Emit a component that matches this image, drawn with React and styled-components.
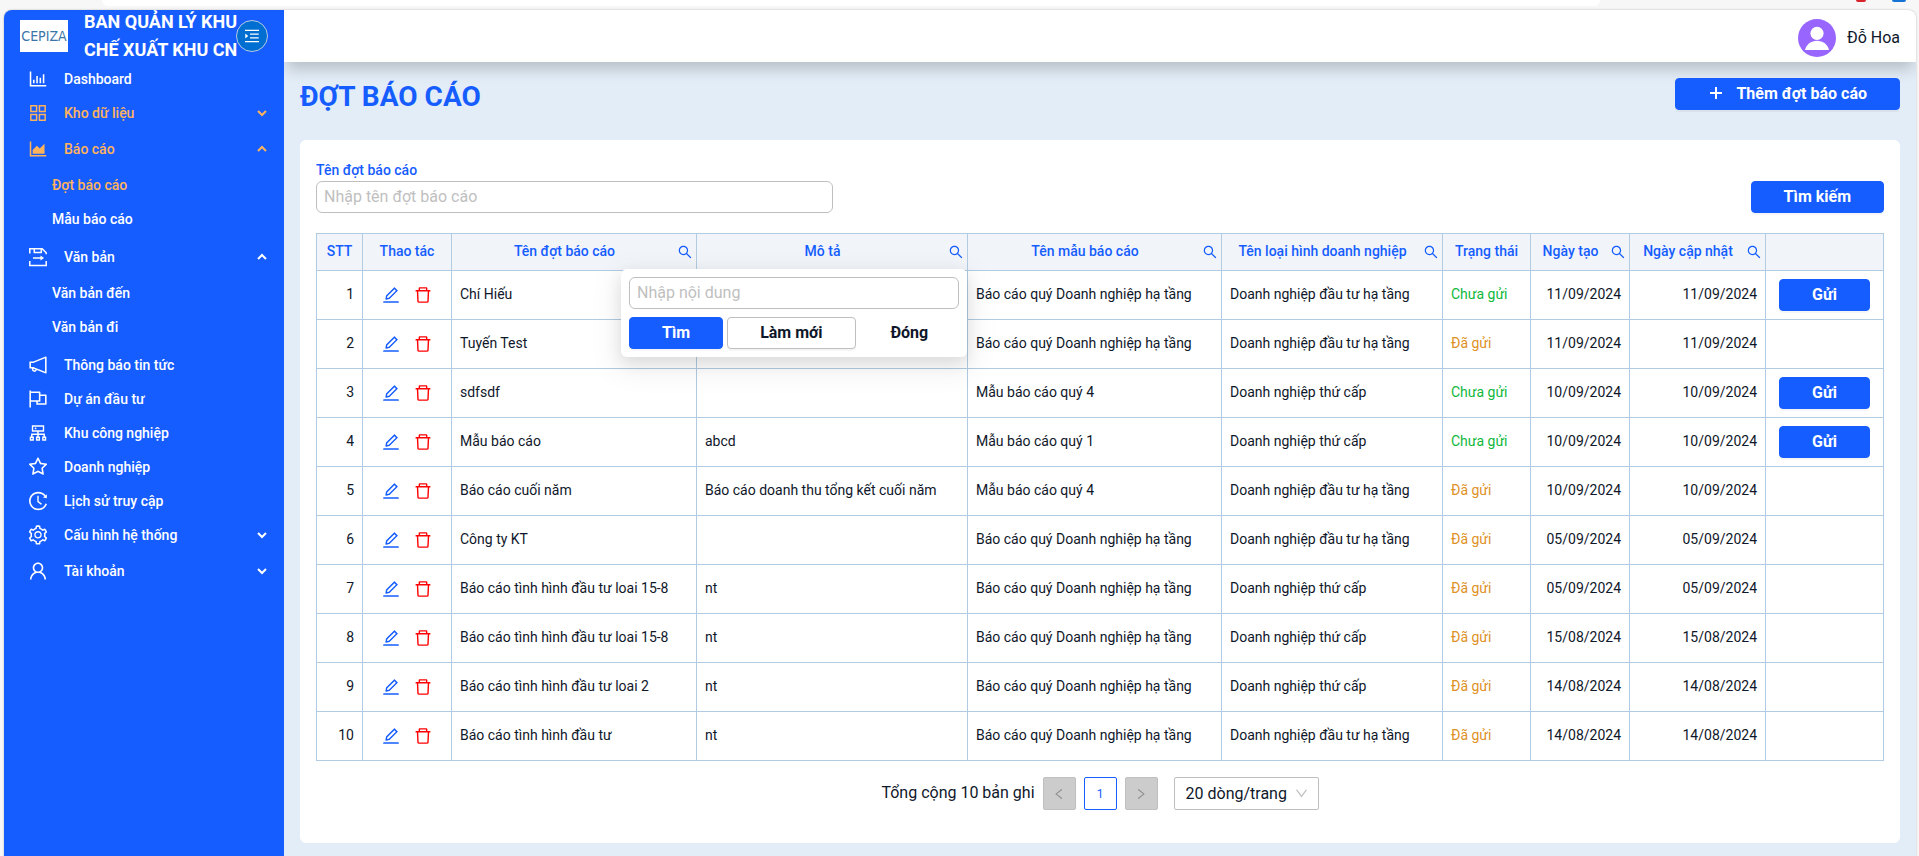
import React, { useState } from "react";
import styled, { createGlobalStyle } from "styled-components";
import {
	AiOutlineAppstore,
	AiOutlineAreaChart,
	AiOutlineBarChart,
	AiOutlineCluster,
	AiOutlineDelete,
	AiOutlineDown,
	AiOutlineEdit,
	AiOutlineFlag,
	AiOutlineHistory,
	AiOutlineLeft,
	AiOutlineMenuUnfold,
	AiOutlineNotification,
	AiOutlineRight,
	AiOutlineSearch,
	AiOutlineSetting,
	AiOutlineStar,
	AiOutlineUser,
} from "react-icons/ai";

const DocumentIcon = () => (
	<svg width="22" height="22" viewBox="-1 -1 22 22" fill="none" stroke="currentColor" strokeWidth="1.5">
		<path d="M1.8 6.500V1.800h12.400l4 4v1.400" />
		<path d="M6.300 2v3.600h7V2" />
		<path d="M1.800 14v4.400h16.400V14" />
		<path d="M5 11h9" />
		<path d="M12.500 8.400v5.200l3.600-2.600z" fill="currentColor" stroke="none" />
	</svg>
);

const PlusIcon = () => (
	<svg width="16" height="16" viewBox="0 0 16 16" stroke="currentColor" strokeWidth="2">
		<path d="M8 2v12M2 8h12" />
	</svg>
);

const Arrow = ({ open }) => (
	<svg width="10" height="10" viewBox="0 0 10 10" fill="none" stroke="currentColor" strokeWidth="2">
		<path d={open ? "M1 7l4-4 4 4" : "M1 3l4 4 4-4"} />
	</svg>
);

const AvatarIcon = () => (
	<svg width="38" height="38" viewBox="0 0 38 38">
		<circle cx="19" cy="19" r="19" fill="#9866ff" />
		<circle cx="19" cy="14.3" r="6.6" fill="#fff" />
		<path d="M7 31c1.2-5.600 6-9.300 12-9.300s10.800 3.700 12 9.300z" fill="#fff" />
	</svg>
);

const menu = [
	{ text: "Dashboard", icon: <AiOutlineBarChart /> },
	{ text: "Kho dữ liệu", icon: <AiOutlineAppstore />, active: true, sub: [] },
	{
		text: "Báo cáo",
		icon: <AiOutlineAreaChart />,
		active: true,
		open: true,
		sub: [{ text: "Đợt báo cáo", active: true }, { text: "Mẫu báo cáo" }],
	},
	{
		text: "Văn bản",
		icon: <DocumentIcon />,
		open: true,
		sub: [{ text: "Văn bản đến" }, { text: "Văn bản đi" }],
	},
	{ text: "Thông báo tin tức", icon: <AiOutlineNotification /> },
	{ text: "Dự án đầu tư", icon: <AiOutlineFlag /> },
	{ text: "Khu công nghiệp", icon: <AiOutlineCluster /> },
	{ text: "Doanh nghiệp", icon: <AiOutlineStar /> },
	{ text: "Lịch sử truy cập", icon: <AiOutlineHistory /> },
	{ text: "Cấu hình hệ thống", icon: <AiOutlineSetting />, sub: [] },
	{ text: "Tài khoản", icon: <AiOutlineUser />, sub: [] },
];

const columns = [
	{ title: "STT", width: 46 },
	{ title: "Thao tác", width: 89 },
	{ title: "Tên đợt báo cáo", width: 245, search: true },
	{ title: "Mô tả", width: 271, search: true, filter: true },
	{ title: "Tên mẫu báo cáo", width: 254, search: true },
	{ title: "Tên loại hình doanh nghiệp", width: 221, search: true },
	{ title: "Trạng thái", width: 88 },
	{ title: "Ngày tạo", width: 99, search: true },
	{ title: "Ngày cập nhật", width: 136, search: true },
	{ title: "", width: 118 },
];

const HA_TANG = "Doanh nghiệp đầu tư hạ tầng";
const THU_CAP = "Doanh nghiệp thứ cấp";
const QUY_HA_TANG = "Báo cáo quý Doanh nghiệp hạ tầng";

const rows = [
	{ name: "Chí Hiếu", desc: "", form: QUY_HA_TANG, type: HA_TANG, sent: false, created: "11/09/2024" },
	{ name: "Tuyến Test", desc: "", form: QUY_HA_TANG, type: HA_TANG, sent: true, created: "11/09/2024" },
	{ name: "sdfsdf", desc: "", form: "Mẫu báo cáo quý 4", type: THU_CAP, sent: false, created: "10/09/2024" },
	{ name: "Mẫu báo cáo", desc: "abcd", form: "Mẫu báo cáo quý 1", type: THU_CAP, sent: false, created: "10/09/2024" },
	{ name: "Báo cáo cuối năm", desc: "Báo cáo doanh thu tổng kết cuối năm", form: "Mẫu báo cáo quý 4", type: HA_TANG, sent: true, created: "10/09/2024" },
	{ name: "Công ty KT", desc: "", form: QUY_HA_TANG, type: HA_TANG, sent: true, created: "05/09/2024" },
	{ name: "Báo cáo tình hình đầu tư loai 15-8", desc: "nt", form: QUY_HA_TANG, type: THU_CAP, sent: true, created: "05/09/2024" },
	{ name: "Báo cáo tình hình đầu tư loai 15-8", desc: "nt", form: QUY_HA_TANG, type: THU_CAP, sent: true, created: "15/08/2024" },
	{ name: "Báo cáo tình hình đầu tư loai 2", desc: "nt", form: QUY_HA_TANG, type: THU_CAP, sent: true, created: "14/08/2024" },
	{ name: "Báo cáo tình hình đầu tư", desc: "nt", form: QUY_HA_TANG, type: HA_TANG, sent: true, created: "14/08/2024" },
];

function Sidebar() {
	return (
		<Side>
			<Brand>
				<Logo>CEPIZA</Logo>
				<BrandName>
					BAN QUẢN LÝ KHU
					<br />
					CHẾ XUẤT KHU CN
				</BrandName>
				<Toggle type="button" aria-label="Thu gọn menu">
					<AiOutlineMenuUnfold />
				</Toggle>
			</Brand>
			<nav>
				{menu.map((item) => (
					<React.Fragment key={item.text}>
						<MenuItem href="#" $active={item.active} $group={!!item.sub}>
							{item.icon}
							<span>{item.text}</span>
							{item.sub && <Arrow open={item.open} />}
						</MenuItem>
						{item.open && (
							<SubMenu>
								{item.sub.map((s) => (
									<SubItem href="#" key={s.text} $active={s.active}>
										{s.text}
									</SubItem>
								))}
							</SubMenu>
						)}
					</React.Fragment>
				))}
			</nav>
		</Side>
	);
}

function FilterPopup({ onClose }) {
	return (
		<Popup>
			<TextBox type="text" placeholder="Nhập nội dung" aria-label="Nhập nội dung" />
			<PopupActions>
				<Button type="button">Tìm</Button>
				<Button type="button" $kind="outline">
					Làm mới
				</Button>
				<Button type="button" $kind="text" onClick={onClose}>
					Đóng
				</Button>
			</PopupActions>
		</Popup>
	);
}

function ReportTable() {
	const [showFilter, setShowFilter] = useState(true);
	return (
		<Table>
			<colgroup>
				{columns.map((c, i) => (
					<col key={i} width={c.width} />
				))}
			</colgroup>
			<thead>
				<tr>
					{columns.map((c, i) => (
						<Th key={i}>
							<HeadCell>
								<span>{c.title}</span>
								{c.search && (
									<IconButton
										type="button"
										aria-label={"Tìm " + c.title}
										$size={16}
										onClick={() => c.filter && setShowFilter(!showFilter)}
									>
										<AiOutlineSearch />
									</IconButton>
								)}
							</HeadCell>
							{c.filter && showFilter && <FilterPopup onClose={() => setShowFilter(false)} />}
						</Th>
					))}
				</tr>
			</thead>
			<tbody>
				{rows.map((r, i) => (
					<tr key={i}>
						<Td $align="right">{i + 1}</Td>
						<Td $control>
							<Actions>
								<IconButton type="button" aria-label="Sửa" $size={20}>
									<AiOutlineEdit />
								</IconButton>
								<IconButton type="button" aria-label="Xóa" $size={20} $danger>
									<AiOutlineDelete />
								</IconButton>
							</Actions>
						</Td>
						<Td>{r.name}</Td>
						<Td>{r.desc}</Td>
						<Td>{r.form}</Td>
						<Td>{r.type}</Td>
						<Td>
							<Status $sent={r.sent}>{r.sent ? "Đã gửi" : "Chưa gửi"}</Status>
						</Td>
						<Td $align="right">{r.created}</Td>
						<Td $align="right">{r.created}</Td>
						<Td $align="center" $control>
							{!r.sent && <Button type="button">Gửi</Button>}
						</Td>
					</tr>
				))}
			</tbody>
		</Table>
	);
}

function App() {
	return (
		<>
			<GlobalStyle />
			<Window>
				<TopStrip>
					<AddressBar />
					<Dot $color="#d8232a" />
					<Dot $color="#1573d6" $wide />
				</TopStrip>
				<Shell>
					<Sidebar />
					<Main>
						<Header>
							<AvatarIcon />
							<span>Đỗ Hoa</span>
						</Header>
						<Content>
							<TitleRow>
								<h1>ĐỢT BÁO CÁO</h1>
								<Button type="button">
									<PlusIcon />
									Thêm đợt báo cáo
								</Button>
							</TitleRow>
							<Card>
								<SearchRow>
									<Field>
										<label htmlFor="report-name">Tên đợt báo cáo</label>
										<TextBox id="report-name" type="text" placeholder="Nhập tên đợt báo cáo" />
									</Field>
									<Button type="button">Tìm kiếm</Button>
								</SearchRow>
								<ReportTable />
								<Pagination>
									<span>Tổng cộng 10 bản ghi</span>
									<PageButton type="button" disabled aria-label="Trang trước">
										<AiOutlineLeft />
									</PageButton>
									<PageButton type="button">1</PageButton>
									<PageButton type="button" disabled aria-label="Trang sau">
										<AiOutlineRight />
									</PageButton>
									<PageSize>
										<select aria-label="Số dòng mỗi trang" defaultValue="20">
											<option value="20">20 dòng/trang</option>
											<option value="50">50 dòng/trang</option>
										</select>
										<AiOutlineDown />
									</PageSize>
								</Pagination>
							</Card>
						</Content>
					</Main>
				</Shell>
			</Window>
		</>
	);
}

export default App;

const GlobalStyle = createGlobalStyle`
	* {
		box-sizing: border-box;
	}
	body {
		margin: 0;
		font-family: Roboto, "Noto Sans", sans-serif;
		font-size: 14px;
		line-height: 22px;
		color: #0f172a;
	}
	button, input, select {
		font-family: inherit;
	}
`;
const Window = styled.div`
	display: flex;
	flex-direction: column;
	min-height: 100vh;
	padding: 0 3px 0 4px;
	background-color: #f7f7f7;
`;
const TopStrip = styled.div`
	display: flex;
	align-items: flex-start;
	gap: 26px;
	height: 10px;
	padding: 0 10px 0 98px;
`;
const AddressBar = styled.div`
	flex: 1;
	height: 6px;
	margin-right: 230px;
	background-color: #fff;
	border-radius: 0 0 12px 12px;
`;
const Dot = styled.div`
	width: ${(p) => (p.$wide ? 14 : 10)}px;
	height: 2px;
	background-color: ${(p) => p.$color};
	border-radius: 0 0 4px 4px;
`;
const Shell = styled.div`
	flex: 1;
	display: flex;
	background-color: #e3edf7;
	border-radius: 8px 8px 0 0;
	overflow: hidden;
	box-shadow: 0 0 2px rgba(0, 0, 0, 0.3);
`;
const Side = styled.aside`
	flex: 0 0 280px;
	background-color: #165dff;
	position: relative;
	z-index: 2;
`;
const Brand = styled.div`
	position: relative;
	display: flex;
	align-items: center;
	gap: 16px;
	height: 52px;
	padding: 0 16px;
`;
const Logo = styled.div`
	width: 48px;
	height: 32px;
	background-color: #fff;
	color: #3a75a8;
	font-family: "Liberation Sans Narrow", "DejaVu Sans Condensed", sans-serif;
	font-size: 14px;
	line-height: 32px;
	text-align: center;
`;
const BrandName = styled.div`
	color: #fff;
	font-size: 18px;
	font-weight: 700;
	line-height: 28px;
	white-space: nowrap;
`;
const Toggle = styled.button`
	position: absolute;
	top: 10px;
	right: 16px;
	display: flex;
	align-items: center;
	justify-content: center;
	width: 32px;
	height: 32px;
	padding: 0;
	border: 1px solid #b7c9e2;
	border-radius: 50%;
	background-color: #006fd1;
	color: #fff;
	font-size: 18px;
	cursor: pointer;
`;
const MenuItem = styled.a`
	display: flex;
	align-items: center;
	gap: 15px;
	height: 34px;
	margin-bottom: ${(p) => (p.$group ? 2 : 0)}px;
	padding: 0 17px 0 23px;
	color: ${(p) => (p.$active ? "#ffb35c" : "#fff")};
	font-weight: 500;
	text-decoration: none;

	span {
		flex: 1;
	}
	svg:first-child {
		width: 22px;
		height: 22px;
	}
`;
const SubMenu = styled.div`
	margin-bottom: 4px;
`;
const SubItem = styled.a`
	display: block;
	padding-left: 48px;
	line-height: 34px;
	color: ${(p) => (p.$active ? "#ffb35c" : "#fff")};
	font-weight: 500;
	text-decoration: none;
`;
const Main = styled.main`
	flex: 1;
	min-width: 0;
	display: flex;
	flex-direction: column;
`;
const Header = styled.header`
	display: flex;
	align-items: center;
	justify-content: flex-end;
	gap: 11px;
	height: 52px;
	padding: 4px 16px 0;
	background-color: #fff;
	box-shadow: 0 10px 15px -3px rgba(0, 0, 0, 0.2);
	font-size: 16px;
`;
const Content = styled.div`
	flex: 1;
	display: flex;
	flex-direction: column;
	padding: 16px 16px 13px;
`;
const Button = styled.button`
	display: inline-flex;
	align-items: center;
	justify-content: center;
	gap: 12px;
	height: 32px;
	padding: 0 32px 2px;
	border: 1px solid #165dff;
	border-radius: 4px;
	background-color: #165dff;
	box-shadow: 0 2px 0 rgba(0, 0, 0, 0.04);
	color: #fff;
	font-size: 16px;
	font-weight: 700;
	white-space: nowrap;
	cursor: pointer;

	${(p) =>
		p.$kind === "outline" &&
		`
		background-color: #fff;
		border-color: #bfbfbf;
		color: #0f172a;
	`}
	${(p) =>
		p.$kind === "text" &&
		`
		flex: 1;
		padding: 0 0 2px;
		background-color: transparent;
		border-color: transparent;
		box-shadow: none;
		color: #0f172a;
	`}
`;
const TitleRow = styled.div`
	display: flex;
	justify-content: space-between;
	height: 32px;
	margin-bottom: 30px;

	h1 {
		margin: 0;
		color: #165dff;
		font-size: 28px;
		font-weight: 700;
		line-height: 38px;
	}
`;
const Card = styled.section`
	flex: 1;
	padding: 16px;
	background-color: #fff;
	border-radius: 6px;
`;
const SearchRow = styled.div`
	display: flex;
	align-items: flex-end;
	justify-content: space-between;
	margin-bottom: 20px;
`;
const Field = styled.div`
	display: flex;
	flex-direction: column;
	width: 33%;

	label {
		padding-top: 3px;
		color: #165dff;
		font-weight: 500;
	}
`;
const TextBox = styled.input`
	width: 100%;
	height: 32px;
	padding: 0 7px 2px;
	border: 1px solid #bfbfbf;
	border-radius: 6px;
	outline: none;
	background-color: #fff;
	color: #0f172a;
	font-size: 16px;

	&::placeholder {
		color: #bfbfbf;
	}
`;
const Table = styled.table`
	width: 100%;
	table-layout: fixed;
	border-collapse: separate;
	border-spacing: 0;
	border-top: 1px solid #b0cbe2;
	border-left: 1px solid #b0cbe2;
`;
const Th = styled.th`
	position: relative;
	height: 37px;
	padding: 0;
	border-right: 1px solid #b0cbe2;
	border-bottom: 1px solid #b0cbe2;
	background-color: #f1f5fa;
	color: #165dff;
	font-weight: 500;
`;
const HeadCell = styled.div`
	display: flex;
	align-items: center;

	span {
		flex: 1;
		padding-bottom: 2px;
	}
	button {
		margin-right: 3px;
	}
`;
const Td = styled.td`
	height: 49px;
	padding: 0 8px ${(p) => (p.$control ? 0 : 2)}px;
	border-right: 1px solid #b0cbe2;
	border-bottom: 1px solid #b0cbe2;
	text-align: ${(p) => p.$align || "left"};
`;
const Actions = styled.div`
	display: flex;
	justify-content: center;
	gap: 12px;
`;
const IconButton = styled.button`
	display: flex;
	padding: 0;
	border: none;
	background: none;
	color: ${(p) => (p.$danger ? "#ff0000" : "#165dff")};
	font-size: ${(p) => p.$size}px;
	cursor: pointer;
`;
const Status = styled.span`
	color: ${(p) => (p.$sent ? "#de9126" : "#10b83c")};
`;
const Popup = styled.div`
	position: absolute;
	top: 100%;
	right: 0;
	z-index: 5;
	width: 346px;
	margin-top: -1px;
	padding: 8px;
	border-radius: 6px;
	background-color: #fff;
	box-shadow: 0 6px 16px rgba(0, 0, 0, 0.1), 0 9px 28px 8px rgba(0, 0, 0, 0.05);
`;
const PopupActions = styled.div`
	display: flex;
	gap: 4px;
	margin-top: 8px;
`;
const Pagination = styled.div`
	display: flex;
	align-items: center;
	justify-content: center;
	gap: 8px;
	margin-top: 16px;
	font-size: 16px;

	> span {
		padding-bottom: 2px;
	}
`;
const PageButton = styled.button`
	display: flex;
	align-items: center;
	justify-content: center;
	width: 33px;
	height: 33px;
	padding: 0;
	border: 1px solid #165dff;
	border-radius: 2px;
	background-color: #fff;
	color: #165dff;
	font-size: 12px;

	&:disabled {
		border-color: #bfbfbf;
		background-color: #ccc;
		color: #8f8f8f;
	}
	svg {
		width: 14px;
		height: 14px;
	}
`;
const PageSize = styled.div`
	position: relative;
	margin-left: 8px;

	select {
		appearance: none;
		height: 33px;
		padding: 0 30px 0 11px;
		border: 1px solid #bfbfbf;
		border-radius: 2px;
		background-color: #fff;
		color: #0f172a;
		font-size: 16px;
	}
	svg {
		position: absolute;
		top: 9px;
		right: 10px;
		width: 15px;
		height: 15px;
		color: #bfbfbf;
		pointer-events: none;
	}
`;
